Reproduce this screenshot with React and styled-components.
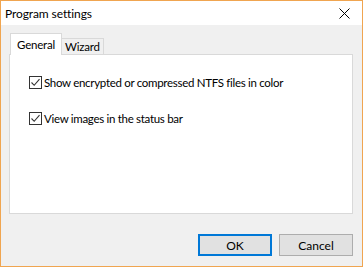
import styled, { createGlobalStyle } from "styled-components";

const GlobalStyle = createGlobalStyle`
  html, body {
    margin: 0;
    padding: 0;
    background: #ffffff;
  }
  * {
    box-sizing: border-box;
  }
`;

const OPTIONS = [
  { id: "ntfs", label: "Show encrypted or compressed NTFS files in color" },
  { id: "status", label: "View images in the status bar" },
];

const CloseIcon = () => (
  <svg width="11" height="11" viewBox="0 0 11 11">
    <path d="M0.5 0.5 L10.5 10.5 M10.5 0.5 L0.5 10.5" stroke="#000" strokeWidth="1" fill="none" />
  </svg>
);

const CheckIcon = () => (
  <svg width="11" height="11" viewBox="0 0 11 11">
    <path d="M1.5 5.5 L4.2 8.3 L9.5 2.2" stroke="#333" strokeWidth="1.1" fill="none" />
  </svg>
);

const App = () => {
  return (
    <>
      <GlobalStyle />
      <St.Window>
        <St.TitleBar>
          <St.Title>Program settings</St.Title>
          <St.CloseBtn type="button">
            <CloseIcon />
          </St.CloseBtn>
        </St.TitleBar>

        <St.Body>
          <St.TabStrip>
            <St.Tab $active>General</St.Tab>
            <St.Tab>Wizard</St.Tab>
          </St.TabStrip>

          <St.Panel>
            {OPTIONS.map(({ id, label }) => (
              <St.OptionRow key={id}>
                <St.CheckBox>
                  <CheckIcon />
                </St.CheckBox>
                <St.OptionLabel>{label}</St.OptionLabel>
              </St.OptionRow>
            ))}
          </St.Panel>

          <St.Footer>
            <St.Button type="button" $default>
              OK
            </St.Button>
            <St.Button type="button">Cancel</St.Button>
          </St.Footer>
        </St.Body>
      </St.Window>
    </>
  );
};

export default App;

const St = {
  Window: styled.div`
    display: flex;
    flex-direction: column;

    width: 363px;
    height: 267px;

    border: 1px solid #f0a550;
    background: #f0f0f0;

    font-family: "Segoe UI", Lato, "Liberation Sans", sans-serif;
    font-size: 11.5px;
    letter-spacing: -0.2px;
    color: #000;
  `,

  TitleBar: styled.div`
    display: flex;
    justify-content: space-between;
    align-items: center;

    height: 24px;
    padding-left: 4px;

    background: #ffffff;
  `,

  Title: styled.span`
    font-size: 12px;
    letter-spacing: -0.1px;
  `,

  CloseBtn: styled.button`
    display: flex;
    align-items: center;
    justify-content: center;

    width: 30px;
    height: 24px;
    padding: 0;
    margin-right: 3px;

    border: none;
    background: transparent;
  `,

  Body: styled.div`
    display: flex;
    flex-direction: column;
    flex: 1;

    padding: 8px 9px 0 8px;
  `,

  TabStrip: styled.div`
    display: flex;
    align-items: flex-end;

    height: 22px;
    padding-left: 1px;
    margin-bottom: -1px;
    position: relative;
    z-index: 1;
  `,

  Tab: styled.div`
    display: flex;
    align-items: center;

    height: ${({ $active }) => ($active ? "22px" : "17px")};
    padding: ${({ $active }) => ($active ? "0 6px 1px 6px" : "0 3px")};

    background: ${({ $active }) => ($active ? "#ffffff" : "#f0f0f0")};
    border: 1px solid #d9d9d9;
    border-bottom: ${({ $active }) => ($active ? "none" : "1px solid #d9d9d9")};
    margin-left: ${({ $active }) => ($active ? "0" : "-1px")};
  `,

  Panel: styled.div`
    display: flex;
    flex-direction: column;
    gap: 23px;

    height: 160px;
    padding: 21px 0 0 19px;

    background: #ffffff;
    border: 1px solid #d9d9d9;
  `,

  OptionRow: styled.label`
    display: flex;
    align-items: center;
    gap: 2px;
  `,

  CheckBox: styled.span`
    display: flex;
    align-items: center;
    justify-content: center;

    width: 13px;
    height: 13px;

    border: 1px solid #333;
    background: #ffffff;
  `,

  OptionLabel: styled.span`
    letter-spacing: -0.3px;
  `,

  Footer: styled.div`
    display: flex;
    justify-content: flex-end;
    gap: 7px;

    padding-top: 20px;
    padding-right: 0;
  `,

  Button: styled.button`
    width: 74px;
    height: 22px;
    padding: 0;

    font-family: inherit;
    font-size: 12px;
    color: #000;

    background: #e1e1e1;
    border: ${({ $default }) => ($default ? "2px solid #0078d7" : "1px solid #adadad")};
  `,
};
